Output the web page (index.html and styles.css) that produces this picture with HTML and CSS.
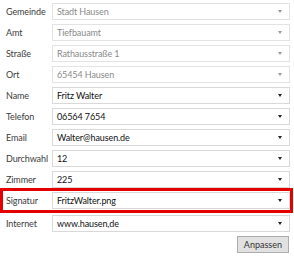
FILE: index.html
```html
<!DOCTYPE html>
<html lang="de">
<head>
  <meta charset="UTF-8" />
  <title>Signatur</title>
  <link rel="stylesheet" href="styles.css">
</head>
<body>
  <div class="form">
    <div class="row"><label>Gemeinde</label><div class="combo disabled"><span>Stadt Hausen</span><i class="arrow"></i></div></div>
    <div class="row"><label>Amt</label><div class="combo disabled"><span>Tiefbauamt</span><i class="arrow"></i></div></div>
    <div class="row"><label>Straße</label><div class="combo disabled"><span>Rathausstraße 1</span><i class="arrow"></i></div></div>
    <div class="row"><label>Ort</label><div class="combo disabled"><span>65454 Hausen</span><i class="arrow"></i></div></div>
    <div class="row"><label>Name</label><div class="combo"><span>Fritz Walter</span><i class="arrow"></i></div></div>
    <div class="row"><label>Telefon</label><div class="combo"><span>06564 7654</span><i class="arrow"></i></div></div>
    <div class="row"><label>Email</label><div class="combo"><span>Walter@hausen.de</span><i class="arrow"></i></div></div>
    <div class="row"><label>Durchwahl</label><div class="combo"><span>12</span><i class="arrow"></i></div></div>
    <div class="row"><label>Zimmer</label><div class="combo"><span>225</span><i class="arrow"></i></div></div>
    <div class="row marked"><label>Signatur</label><div class="combo"><span>FritzWalter.png</span><i class="arrow"></i></div></div>
    <div class="row"><label>Internet</label><div class="combo"><span>www.hausen,de</span><i class="arrow"></i></div></div>
    <div class="actions"><button type="button">Anpassen</button></div>
  </div>
</body>
</html>
```

FILE: styles.css
```css
body {
  margin: 0;
  background: #fff;
  font-family: Lato, "Liberation Sans", sans-serif;
  font-size: 9px;
  letter-spacing: -0.1px;
  color: #333;
}
.form {
  display: flex;
  flex-direction: column;
  gap: 4px;
  padding: 3px 4px 0 5px;
}
.row {
  display: grid;
  grid-template-columns: 47px 1fr;
  align-items: center;
  height: 17px;
}
.row label { color: #3c3c3c; white-space: nowrap; padding-left: 1px; }
.combo {
  display: flex;
  align-items: center;
  justify-content: space-between;
  height: 17px;
  box-sizing: border-box;
  border: 1px solid #d9d9d9;
  padding: 0 7px 0 4px;
  color: #111;
}
.combo.disabled { color: #8a8a8a; border-color: #e3e3e3; }
.arrow {
  width: 0;
  height: 0;
  border-left: 2.5px solid transparent;
  border-right: 2.5px solid transparent;
  border-top: 3px solid #222;
}
.disabled .arrow { border-top-color: #999; }
.row.marked {
  height: 17px;
  margin: -4px -3px -2px -5px;
  padding: 1px 0 1px 2px;
  border: 3px solid #e50000;
}
.actions {
  display: flex;
  justify-content: flex-end;
}
button {
  font: inherit;
  color: #333;
  background: #e1e1e1;
  border: 1px solid #adadad;
  height: 17px;
  padding: 0 6px;
  margin-right: 1px;
}
```
